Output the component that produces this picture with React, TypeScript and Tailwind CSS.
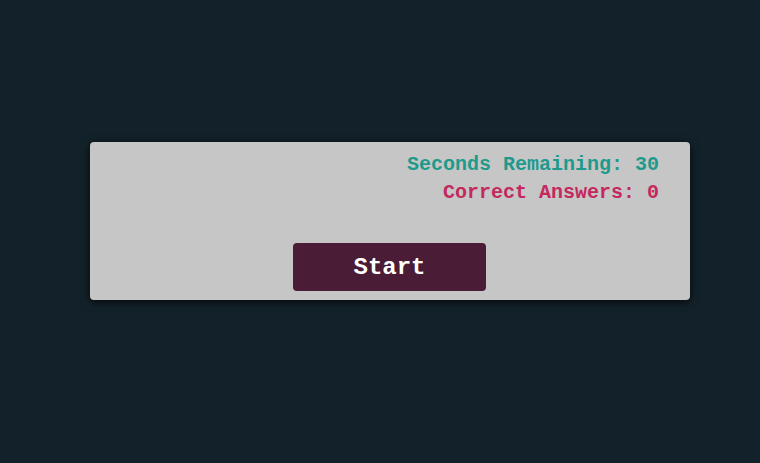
export default function App() {
  return (
    <div className="w-[760px] h-[463px] bg-[#13222a] flex flex-col items-start" style={{ fontFamily: '"Liberation Mono", "Courier New", monospace' }}>
      <div className="mt-[142px] ml-[90px] w-[600px] h-[158px] bg-[#c6c6c6] rounded-[4px] shadow-[0_2px_10px_rgba(0,0,0,0.8)] flex flex-col pt-[9px] pr-[31px]">
        <div className="text-right text-[20px] leading-[28px] font-bold text-[#1e9a8d]">Seconds Remaining: 30</div>
        <div className="text-right text-[20px] leading-[28px] font-bold text-[#c4285f]">Correct Answers: 0</div>
        <div className="flex justify-center mt-[36px] pl-[30px]">
          <button className="w-[193px] h-[48px] bg-[#4a1c35] rounded-[4px] text-white text-[24px] font-bold pt-[2px]" style={{ fontFamily: '"Liberation Mono", "Courier New", monospace' }}>Start</button>
        </div>
      </div>
    </div>
  );
}
